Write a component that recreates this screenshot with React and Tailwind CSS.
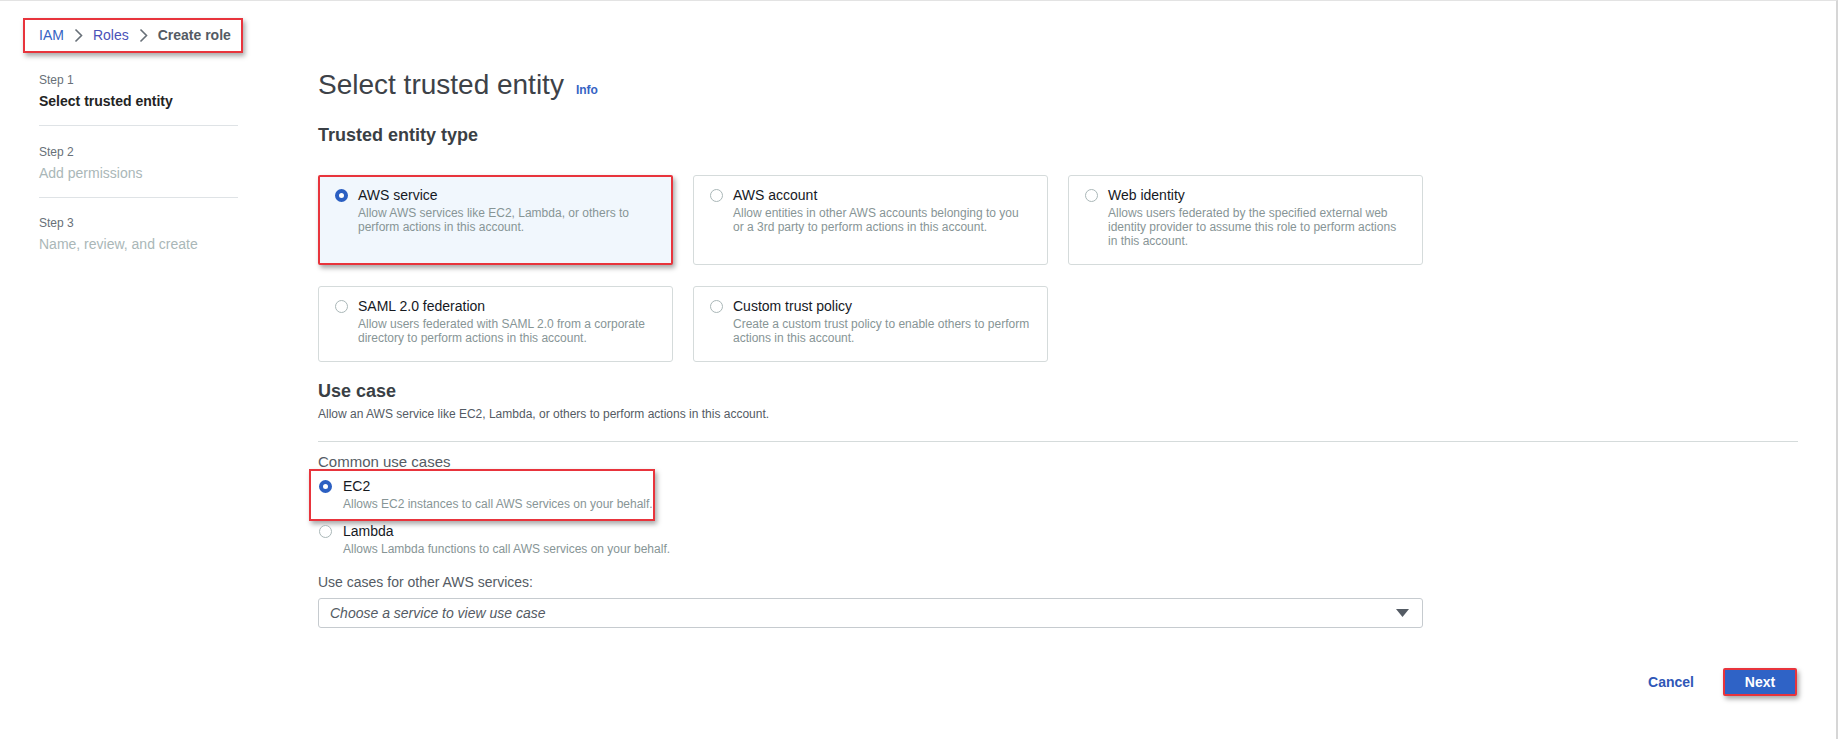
import React from "react";

const annot = "border-2 border-[#e8343c] shadow-[2px_3px_5px_rgba(0,0,0,0.35)]";

function Chevron() {
  return (
    <svg width="9" height="15" viewBox="0 0 9 15" className="shrink-0">
      <polyline points="1.5,1.5 7.5,7.5 1.5,13.5" fill="none" stroke="#687078" strokeWidth="1.6" />
    </svg>
  );
}

function Radio({ checked }) {
  return checked ? (
    <span className="block w-[13px] h-[13px] rounded-full border-[4px] border-[#2b5fc2] bg-white shrink-0" />
  ) : (
    <span className="block w-[13px] h-[13px] rounded-full border border-[#aab7b8] bg-white shrink-0" />
  );
}

function EntityCard({ title, desc, selected }) {
  return (
    <div
      className={
        selected
          ? `flex rounded-[2px] bg-[#f1f7fd] pt-[10px] pl-[15px] pb-[15px] ${annot}`
          : "flex rounded-[3px] border border-[#d5dbdb] bg-white pt-[11px] pl-[16px] pb-[16px]"
      }
    >
      <div className="mt-[2px]">
        <Radio checked={selected} />
      </div>
      <div className="ml-[10px] w-[298px]">
        <div className="text-[14px] leading-[16px] text-[#16191f]">{title}</div>
        <div className="mt-[3px] text-[12px] leading-[14px] text-[#879596]">{desc}</div>
      </div>
    </div>
  );
}

function UseCase({ title, desc, checked }) {
  return (
    <div className="flex">
      <div className="mt-[2px]">
        <Radio checked={checked} />
      </div>
      <div className="ml-[11px]">
        <div className="text-[14px] leading-[16px] text-[#16191f]">{title}</div>
        <div className="mt-[2px] text-[12px] leading-[16px] text-[#879596]">{desc}</div>
      </div>
    </div>
  );
}

function Step({ label, title, active }) {
  return (
    <div>
      <div className="text-[12px] leading-[16px] text-[#687078]">{label}</div>
      <div
        className={
          active
            ? "mt-[4px] text-[14px] leading-[18px] font-bold text-[#232323]"
            : "mt-[4px] text-[14px] leading-[18px] text-[#aab7b8]"
        }
      >
        {title}
      </div>
    </div>
  );
}

export default function App() {
  return (
    <div className="w-[1845px] h-[739px] bg-white font-['Liberation_Sans',Arial,sans-serif]">
      <div className="w-[1838px] h-[739px] border-t border-t-[#e3e3e3] border-r-2 border-r-[#d6d6d6]">
        <div className="pt-[17px] pl-[23px]">
          <nav className={`inline-flex items-center h-[35px] pl-[14px] pr-[10px] gap-[10px] text-[14px] ${annot}`}>
            <span className="text-[#3663c4]">IAM</span>
            <Chevron />
            <span className="text-[#4a52b8]">Roles</span>
            <Chevron />
            <span className="font-bold text-[#545b64]">Create role</span>
          </nav>
        </div>

        <div className="flex mt-[12px]">
          <aside className="w-[318px] pl-[39px] pt-[7px] shrink-0">
            <div className="w-[199px]">
              <Step label="Step 1" title="Select trusted entity" active />
              <div className="h-px bg-[#dfe3e6] mt-[15px]" />
              <div className="mt-[18px]">
                <Step label="Step 2" title="Add permissions" />
              </div>
              <div className="h-px bg-[#dfe3e6] mt-[15px]" />
              <div className="mt-[17px]">
                <Step label="Step 3" title="Name, review, and create" />
              </div>
            </div>
          </aside>

          <main className="w-[1480px] pt-[3px]">
            <div className="flex items-baseline h-[34px]">
              <h1 className="text-[28px] leading-[34px] text-[#3d4248]">Select trusted entity</h1>
              <span className="ml-[12px] text-[12px] font-bold text-[#3663c4]">Info</span>
            </div>

            <h2 className="mt-[22px] text-[18px] leading-[22px] font-bold text-[#3a3f45]">Trusted entity type</h2>

            <div className="mt-[29px] grid grid-cols-[355px_355px_355px] gap-x-[20px] gap-y-[21px]">
              <EntityCard
                selected
                title="AWS service"
                desc="Allow AWS services like EC2, Lambda, or others to perform actions in this account."
              />
              <EntityCard
                title="AWS account"
                desc="Allow entities in other AWS accounts belonging to you or a 3rd party to perform actions in this account."
              />
              <EntityCard
                title="Web identity"
                desc="Allows users federated by the specified external web identity provider to assume this role to perform actions in this account."
              />
              <EntityCard
                title="SAML 2.0 federation"
                desc="Allow users federated with SAML 2.0 from a corporate directory to perform actions in this account."
              />
              <EntityCard
                title="Custom trust policy"
                desc="Create a custom trust policy to enable others to perform actions in this account."
              />
            </div>

            <h2 className="mt-[18px] text-[18px] leading-[22px] font-bold text-[#3a3f45]">Use case</h2>
            <p className="mt-[4px] text-[12px] leading-[16px] text-[#545b64]">
              Allow an AWS service like EC2, Lambda, or others to perform actions in this account.
            </p>
            <div className="mt-[19px] h-px bg-[#d5dbdb]" />

            <div className="mt-[11px] text-[15px] leading-[18px] text-[#545b64]">Common use cases</div>
            <div className={`-mt-[2px] -ml-[9px] w-[346px] pl-[8px] pt-[7px] pb-[7px] ${annot}`}>
              <UseCase checked title="EC2" desc="Allows EC2 instances to call AWS services on your behalf." />
            </div>
            <div className="mt-[2px] pl-[1px]">
              <UseCase title="Lambda" desc="Allows Lambda functions to call AWS services on your behalf." />
            </div>

            <div className="mt-[16px] text-[14px] leading-[18px] text-[#545b64]">Use cases for other AWS services:</div>
            <div className="mt-[7px] w-[1105px] h-[30px] flex items-center justify-between rounded-[3px] border border-[#c6cbcf] pl-[11px] pr-[13px]">
              <span className="text-[14px] italic text-[#545b64]">Choose a service to view use case</span>
              <svg width="13" height="8" viewBox="0 0 13 8">
                <polygon points="0,0 13,0 6.5,8" fill="#545b64" />
              </svg>
            </div>

            <div className="mt-[40px] flex items-center justify-end gap-[29px] pr-[1px]">
              <button className="text-[14px] font-bold text-[#2f57b7]">Cancel</button>
              <button
                className={`w-[74px] h-[28px] bg-[#2f63c6] text-white text-[14px] font-bold rounded-[2px] ${annot}`}
              >
                Next
              </button>
            </div>
          </main>
        </div>
      </div>
    </div>
  );
}
